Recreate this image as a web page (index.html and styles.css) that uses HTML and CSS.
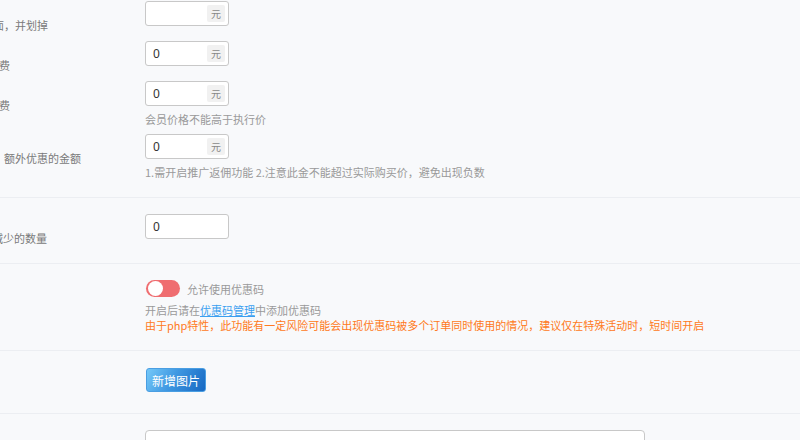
FILE: index.html
```html
<!DOCTYPE html>
<html>
<head>
  <meta charset="UTF-8">
  <title>商品设置</title>
  <link rel="stylesheet" href="styles.css">
</head>
<body>
  <div class="form">
    <div class="section section-price">
      <div class="form-item">
        <div class="item-label"><span class="label-text cut-7">面，并划掉</span></div>
        <div class="item-body">
          <div class="input-group">
            <input class="input" type="text" value="">
            <span class="addon">元</span>
          </div>
        </div>
      </div>
      <div class="form-item">
        <div class="item-label"><span class="label-text cut-1">费</span></div>
        <div class="item-body">
          <div class="input-group">
            <input class="input" type="text" value="0">
            <span class="addon">元</span>
          </div>
        </div>
      </div>
      <div class="form-item has-help">
        <div class="item-label"><span class="label-text cut-1">费</span></div>
        <div class="item-body">
          <div class="input-group">
            <input class="input" type="text" value="0">
            <span class="addon">元</span>
          </div>
          <div class="help">会员价格不能高于执行价</div>
        </div>
      </div>
      <div class="form-item has-help last">
        <div class="item-label"><span class="label-text push-4">额外优惠的金额</span></div>
        <div class="item-body">
          <div class="input-group">
            <input class="input" type="text" value="0">
            <span class="addon">元</span>
          </div>
          <div class="help">1.需开启推广返佣功能 2.注意此金不能超过实际购买价，避免出现负数</div>
        </div>
      </div>
    </div>

    <div class="section section-stock">
      <div class="form-item last">
        <div class="item-label"><span class="label-text cut-8">减少的数量</span></div>
        <div class="item-body">
          <div class="input-group plain">
            <input class="input" type="text" value="0">
          </div>
        </div>
      </div>
    </div>

    <div class="section section-coupon">
      <div class="form-item last">
        <div class="item-label"></div>
        <div class="item-body">
          <div class="switch-row">
            <span class="switch"><span class="knob"></span></span>
            <span class="switch-text">允许使用优惠码</span>
          </div>
          <div class="notes">
            <div class="note">开启后请在<a href="#" class="link">优惠码管理</a>中添加优惠码</div>
            <div class="note warn">由于php特性，此功能有一定风险可能会出现优惠码被多个订单同时使用的情况，建议仅在特殊活动时，短时间开启</div>
          </div>
        </div>
      </div>
    </div>

    <div class="section section-images">
      <div class="form-item last">
        <div class="item-label"></div>
        <div class="item-body">
          <button class="btn-blue">新增图片</button>
        </div>
      </div>
    </div>

    <div class="section section-desc">
      <div class="form-item last">
        <div class="item-label"></div>
        <div class="item-body">
          <div class="textarea"></div>
        </div>
      </div>
    </div>
  </div>
</body>
</html>
```

FILE: styles.css
```css
:root {
  --bg: #f8f9fb;
  --line: #eceef2;
  --label: #7a7a7a;
  --help: #9a9a9a;
  --border: #c8c8c8;
  --link: #3a9ff0;
  --warn: #ff7a22;
}

body {
  margin: 0;
  padding: 0;
  background-color: var(--bg);
  font-family: "Noto Sans CJK SC", "Noto Sans", sans-serif;
  font-size: 11px;
  color: #333;
  overflow: hidden;
}

.section {
  border-top: 1px solid var(--line);
}

.section-price {
  border-top: none;
  padding: 1px 0 16px;
}

.section-stock {
  padding: 16px 0 24px;
}

.section-coupon {
  padding: 16px 0 17px;
}

.section-images {
  padding: 17px 0 20px;
}

.section-desc {
  padding: 16px 0 0;
}

.form-item {
  display: grid;
  grid-template-columns: 145px 1fr;
  margin-bottom: 15px;
}

.form-item.has-help {
  margin-bottom: 6px;
}

.form-item.last {
  margin-bottom: 0;
}

/* label sits a line lower than the input and is allowed to hang below it */
.item-label {
  height: 25px;
  white-space: nowrap;
  color: var(--label);
}

.label-text {
  display: inline-block;
  margin-top: 16px;
  line-height: 16px;
}

.cut-8 { margin-left: -8px; }
.cut-7 { margin-left: -7px; }
.cut-1 { margin-left: -1px; }
.push-4 { margin-left: 4px; }

.input-group {
  display: flex;
  align-items: center;
  box-sizing: border-box;
  width: 84px;
  height: 25px;
  border: 1px solid var(--border);
  border-radius: 3px;
  background-color: #fff;
  padding: 0 3px 0 7px;
}

.input {
  flex: 1;
  min-width: 0;
  border: none;
  outline: none;
  padding: 0;
  background: transparent;
  font-family: "Noto Sans", "Noto Sans CJK SC", sans-serif;
  font-size: 12px;
  color: #333;
}

.addon {
  width: 18px;
  height: 17px;
  line-height: 17px;
  text-align: center;
  background-color: #f1f1f1;
  color: #888;
  font-size: 10px;
  border-radius: 2px;
}

.help {
  color: var(--help);
  line-height: 20px;
  padding-top: 3px;
  white-space: nowrap;
}

.has-help .help {
  margin-bottom: -1px;
}

.switch-row {
  display: flex;
  align-items: center;
  height: 17px;
}

.switch {
  position: relative;
  display: inline-block;
  width: 34px;
  height: 17px;
  border-radius: 9px;
  background-color: #ef6d70;
  margin-left: 1px;
}

.knob {
  position: absolute;
  top: 1px;
  left: 2px;
  width: 15px;
  height: 15px;
  border-radius: 50%;
  background-color: #fff;
}

.switch-text {
  margin-left: 7px;
  color: var(--help);
}

.notes {
  margin-top: 6px;
  line-height: 15px;
  white-space: nowrap;
}

.note {
  color: var(--help);
}

.note.warn {
  color: var(--warn);
}

.link {
  color: var(--link);
  text-decoration: underline;
}

.btn-blue {
  display: block;
  margin-left: 1px;
  width: 60px;
  height: 24px;
  padding: 0;
  border: 1px solid #4a9ee2;
  border-radius: 3px;
  background: linear-gradient(120deg, #74c8f8 0%, #3f98e2 45%, #1768c2 100%);
  color: #fff;
  font-family: "Noto Sans CJK SC", sans-serif;
  font-size: 12px;
  cursor: pointer;
}

.textarea {
  width: 500px;
  height: 60px;
  box-sizing: border-box;
  border: 1px solid var(--border);
  border-radius: 4px;
  background-color: #fff;
}
```
